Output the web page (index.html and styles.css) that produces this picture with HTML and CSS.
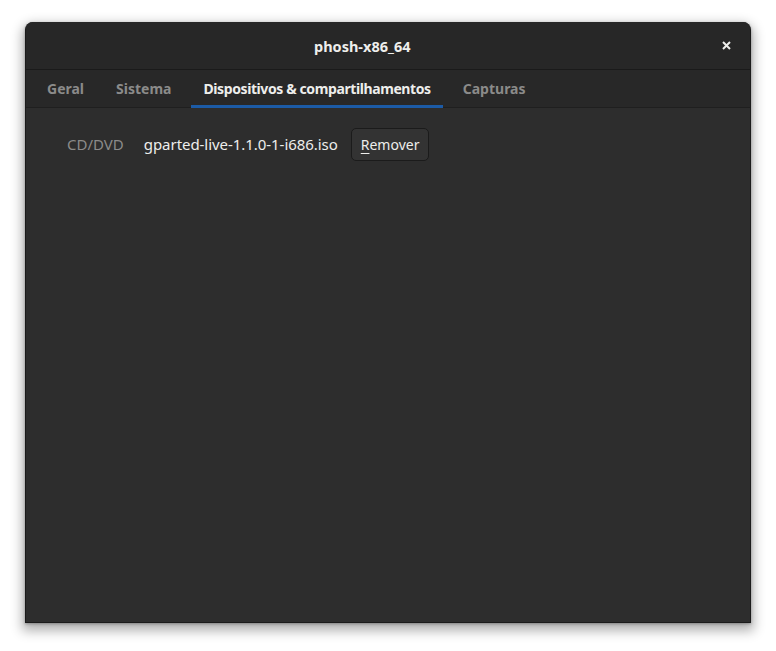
FILE: index.html
```html
<!DOCTYPE html>
<html lang="pt">
<head>
<meta charset="utf-8">
<title>phosh-x86_64</title>
<link rel="stylesheet" href="styles.css">
</head>
<body>
<div class="window">
  <header class="headerbar">
    <div class="title">phosh-x86_64</div>
    <button class="close" aria-label="Fechar">
      <svg width="9" height="9" viewBox="0 0 9 9"><path d="M1 1L8 8M8 1L1 8" stroke="#eeeeec" stroke-width="2" stroke-linecap="butt"/></svg>
    </button>
  </header>
  <nav class="tabs">
    <div class="tab">Geral</div>
    <div class="tab">Sistema</div>
    <div class="tab active">Dispositivos &amp; compartilhamentos</div>
    <div class="tab">Capturas</div>
  </nav>
  <main class="content">
    <div class="row">
      <span class="label">CD/DVD</span>
      <span class="value">gparted-live-1.1.0-1-i686.iso</span>
      <button class="btn"><u>R</u>emover</button>
    </div>
  </main>
</div>
</body>
</html>
```

FILE: styles.css
```css
html, body {
  margin: 0;
  padding: 0;
  background: #ffffff;
}
body {
  font-family: "Noto Sans", "Open Sans", sans-serif;
  font-size: 15px;
  color: #eeeeec;
  padding-bottom: 40px;
}
.window {
  margin: 22px 0 0 25px;
  width: 726px;
  height: 601px;
  box-sizing: border-box;
  border: 1px solid #1b1b1b;
  border-top: none;
  border-radius: 8px 8px 0 0;
  background: #2d2d2d;
  display: flex;
  flex-direction: column;
  overflow: hidden;
  box-shadow: 0 5px 12px 3px rgba(0,0,0,0.3), 0 1px 3px rgba(0,0,0,0.3);
}
.headerbar {
  height: 47px;
  flex: none;
  background: #272727;
  border-bottom: 1px solid #1a1a1a;
  display: flex;
  align-items: center;
}
.title {
  flex: 1;
  padding-left: 288px;
  font-weight: bold;
  font-size: 14.5px;
  color: #eeeeec;
}
.close {
  width: 34px;
  height: 34px;
  margin-right: 7px;
  background: transparent;
  border: none;
  display: flex;
  align-items: center;
  justify-content: center;
  padding: 0;
}
.tabs {
  height: 37px;
  flex: none;
  background: #282828;
  border-bottom: 1px solid #1f1f1f;
  display: flex;
  gap: 8px;
  padding-left: 9px;
  font-size: 14px;
}
.tab {
  padding: 0 12px;
  display: flex;
  align-items: center;
  font-weight: bold;
  color: #8b8b8a;
  box-sizing: border-box;
  border-bottom: 3px solid transparent;
  margin-bottom: -1px;
  padding-top: 2px;
}
.tab.active {
  color: #eeeeec;
  border-bottom-color: #1c5ba6;
  letter-spacing: -0.4px;
}
.content {
  flex: 1;
  padding: 20px 0 0 41px;
}
.row {
  display: flex;
  align-items: center;
  height: 33px;
}
.label,
.value {
  padding-bottom: 2px;
}
.label {
  color: #8b8b8a;
  margin-right: 20px;
}
.value {
  margin-right: 13px;
  letter-spacing: -0.05px;
}
.btn {
  height: 33px;
  padding: 0 9px;
  box-sizing: border-box;
  font-family: inherit;
  font-size: 14px;
  color: #eeeeec;
  background: #333333;
  border: 1px solid #1b1b1b;
  border-radius: 5px;
}
.btn u {
  text-decoration-thickness: 1px;
  text-underline-offset: 3px;
}
```
